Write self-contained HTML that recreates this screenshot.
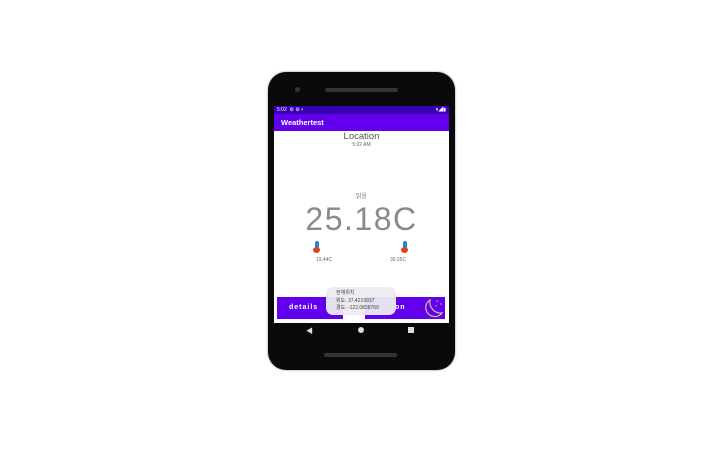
<html><head><style>
body{margin:0;width:717px;height:458px;background:#fff;position:relative;overflow:hidden;font-family:"Liberation Sans","Noto Sans CJK KR",sans-serif}
.a{position:absolute}
</style></head><body>
<div class="a" style="left:268px;top:72px;width:187px;height:298px;background:#0a0a0a;border-radius:18px;box-shadow:0 0 2px #888"></div>
<div class="a" style="left:295px;top:87px;width:5px;height:5px;border-radius:50%;background:#334"></div>
<div class="a" style="left:325px;top:88px;width:73px;height:4px;border-radius:2px;background:#333"></div>
<div class="a" style="left:324px;top:353px;width:73px;height:4px;border-radius:2px;background:#333"></div>
<div class="a" style="left:274px;top:106px;width:175px;height:217px;background:#fff"></div>
<div class="a" style="left:274px;top:106px;width:175px;height:8px;background:#3700b3;color:#fff;font-size:5px;line-height:8px;padding-left:3px;box-sizing:border-box">5:02 &nbsp;⚙ ⚙ ▪<span style="float:right;padding-right:3px">▾◢▮</span></div>
<div class="a" style="left:274px;top:114px;width:175px;height:17px;background:#6200ee;color:#fff;font-size:7.5px;font-weight:bold;line-height:17px;padding-left:7px;box-sizing:border-box">Weathertest</div>
<div class="a" style="left:274px;top:131px;width:175px;text-align:center;font-size:9.5px;color:#555">Location</div>
<div class="a" style="left:274px;top:142px;width:175px;text-align:center;font-size:5px;color:#666">5:02 AM</div>
<div class="a" style="left:274px;top:191px;width:175px;text-align:center;font-size:6px;color:#777">맑음</div>
<div class="a" style="left:274px;top:201px;width:175px;text-align:center;font-size:32px;color:#8a8a8a;letter-spacing:1.5px">25.18C</div>
<div class="a" style="left:315px;top:241px;width:4px;height:9px;background:#2a7fd8;border-radius:2px"></div>
<div class="a" style="left:313px;top:247px;width:7px;height:6px;background:#e04020;border-radius:50%"></div>
<div class="a" style="left:403px;top:241px;width:4px;height:9px;background:#2a7fd8;border-radius:2px"></div>
<div class="a" style="left:401px;top:247px;width:7px;height:6px;background:#e04020;border-radius:50%"></div>
<div class="a" style="left:306px;top:257px;width:36px;text-align:center;font-size:5px;color:#666">19.44C</div>
<div class="a" style="left:380px;top:257px;width:36px;text-align:center;font-size:5px;color:#666">30.25C</div>
<div class="a" style="left:277px;top:297px;width:66px;height:22px;background:#6200ee;color:#fff;font-size:7px;font-weight:bold;letter-spacing:1px;line-height:22px;padding-left:12px;box-sizing:border-box">details</div>
<div class="a" style="left:365px;top:297px;width:80px;height:22px;background:#6200ee;color:#fff;font-size:7px;font-weight:bold;letter-spacing:1px;line-height:22px;padding-left:27px;box-sizing:border-box">ion</div>
<svg class="a" style="left:418px;top:297px" width="27" height="22" viewBox="0 0 27 22"><path d="M12 3 A9 9 0 1 0 24 16 A11 11 0 0 1 12 3 Z" fill="none" stroke="#c8b890" stroke-width="1.3"/><circle cx="19" cy="4" r=".8" fill="#c8b890"/><circle cx="23" cy="7" r=".8" fill="#c8b890"/><circle cx="18" cy="9" r=".7" fill="#c8b890"/></svg>
<div class="a" style="left:326px;top:287px;width:70px;height:28px;background:rgba(235,235,240,.95);border-radius:7px;font-size:5px;color:#444;line-height:7.5px;padding:3px 0 0 10px;box-sizing:border-box">현재위치<br>위도: 37.4219937<br>경도: -122.0838769</div>
<div class="a" style="left:306px;top:326px;font-size:7px;color:#ddd">◀</div>
<div class="a" style="left:358px;top:327px;width:6px;height:6px;border-radius:50%;background:#ddd"></div>
<div class="a" style="left:408px;top:327px;width:6px;height:6px;background:#ddd"></div>
</body></html>
